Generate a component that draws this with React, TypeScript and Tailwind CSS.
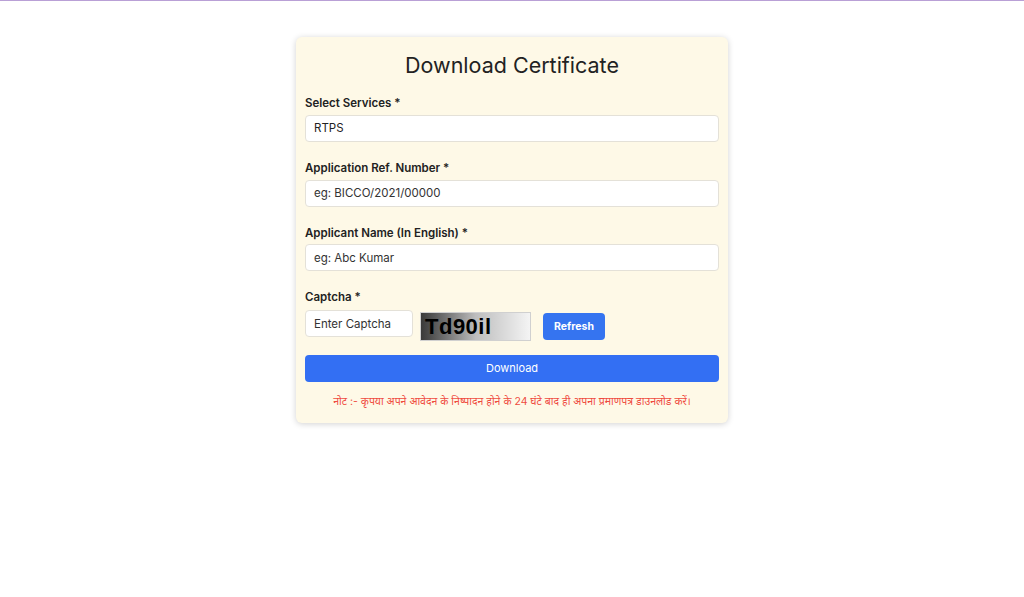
import { useState } from "react";

const SERVICES = ["RTPS"];

function Field({ label, children }: { label: string; children: React.ReactNode }) {
  return (
    <div className="mb-[19px]">
      <label className="block text-[11.5px] font-semibold text-[#222] leading-[15px] mb-[3px]">{label}</label>
      {children}
    </div>
  );
}

export default function App() {
  const [form, setForm] = useState({ service: "RTPS", ref: "", name: "", captcha: "" });

  return (
    <div className="min-h-[597px] bg-white border-t border-[#b9a0d6] font-['Inter','Noto_Sans',sans-serif]">
      <div className="flex justify-center pt-[36px]">
        <div className="w-[432px] bg-[#fef9e7] rounded-[6px] shadow-[0_1px_6px_rgba(0,0,0,0.18)] px-[9px] pt-[14px] pb-[13px]">
          <h1 className="text-center text-[21.5px] leading-[28px] text-[#222] mb-[17px]">Download Certificate</h1>

          <Field label="Select Services *">
            <select
              value={form.service}
              onChange={e => setForm({ ...form, service: e.target.value })}
              className="w-full h-[27px] appearance-none bg-white border border-[#e4e1d8] rounded-[4px] px-[8px] text-[11.5px] text-[#222] focus:outline-none"
            >
              {SERVICES.map(s => <option key={s} value={s}>{s}</option>)}
            </select>
          </Field>

          <Field label="Application Ref. Number *">
            <input
              type="text"
              placeholder="eg: BICCO/2021/00000"
              value={form.ref}
              onChange={e => setForm({ ...form, ref: e.target.value })}
              className="w-full h-[27px] bg-white border border-[#e4e1d8] rounded-[4px] px-[8px] text-[11.5px] text-[#222] placeholder-[#333] focus:outline-none"
            />
          </Field>

          <Field label="Applicant Name (In English) *">
            <input
              type="text"
              placeholder="eg: Abc Kumar"
              value={form.name}
              onChange={e => setForm({ ...form, name: e.target.value })}
              className="w-full h-[27px] bg-white border border-[#e4e1d8] rounded-[4px] px-[8px] text-[11.5px] text-[#222] placeholder-[#333] focus:outline-none"
            />
          </Field>

          <div className="mb-[13px]">
            <label className="block text-[11.5px] font-semibold text-[#222] leading-[15px] mb-[5px]">Captcha *</label>
            <div className="flex items-start">
              <input
                type="text"
                placeholder="Enter Captcha"
                value={form.captcha}
                onChange={e => setForm({ ...form, captcha: e.target.value })}
                className="w-[108px] h-[27px] bg-white border border-[#e4e1d8] rounded-[4px] px-[8px] text-[11.5px] text-[#222] placeholder-[#333] focus:outline-none"
              />
              <div className="ml-[7px] mt-[2px] w-[111px] h-[29px] border border-[#d0d0d0] bg-gradient-to-r from-[#3a3a3a] via-[#bdbdbd] to-[#f4f4f4] flex items-center pl-[4px]">
                <span className="font-['Liberation_Sans',sans-serif] font-bold text-[22px] leading-none text-black tracking-[0.5px]">Td90il</span>
              </div>
              <button
                type="button"
                className="ml-[12px] mt-[3px] w-[62px] h-[27px] bg-[#3574f0] text-white text-[10.5px] font-bold rounded-[4px]"
              >
                Refresh
              </button>
            </div>
          </div>

          <button
            type="button"
            className="w-full h-[27px] bg-[#336ff3] text-white text-[11px] rounded-[4px]"
          >
            Download
          </button>

          <p className="text-center text-[10.5px] text-[#ef4b3f] mt-[12px]">
            नोट :- कृपया अपने आवेदन के निष्पादन होने के 24 घंटे बाद ही अपना प्रमाणपत्र डाउनलोड करें।
          </p>
        </div>
      </div>
    </div>
  );
}
